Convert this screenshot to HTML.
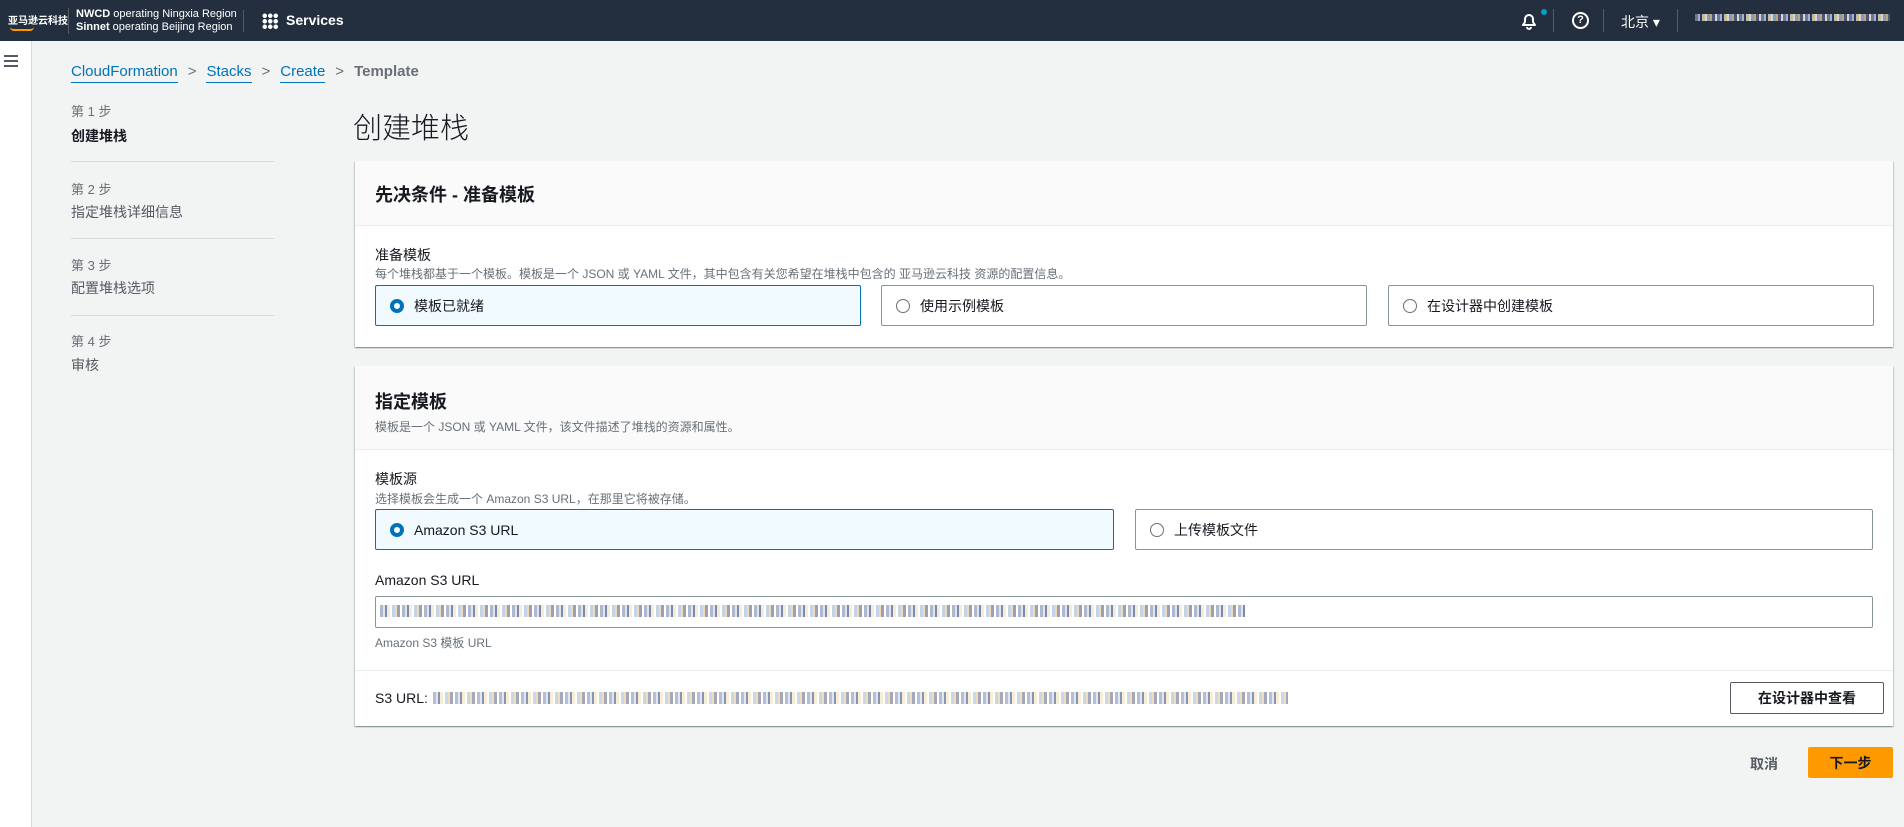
<!DOCTYPE html>
<html><head><meta charset="utf-8"><style>
*{box-sizing:border-box;margin:0;padding:0}
body{width:1904px;height:827px;overflow:hidden;background:#f2f3f3;font-family:"Liberation Sans","Noto Sans CJK SC",sans-serif;font-size:14px;color:#16191f;position:relative}
.a{position:absolute}
.hdr{left:0;top:0;width:1904px;height:41px;background:#232f3e;color:#fff}
.nav{left:0;top:41px;width:32px;height:786px;background:#fff;border-right:1px solid #d5dbdb}
.bc{top:63px;left:71px;font-size:15px;color:#0073bb}
.bc span.l{border-bottom:1px solid #0073bb;padding-bottom:2px}
.bc .s{color:#687078;margin:0 10px}
.step{left:71px;color:#687078;font-size:13px}
.stepn{left:71px;font-size:14px;color:#16191f}
.dv{left:71px;width:203px;height:1px;background:#d5dbdb}
.panel{background:#fff;box-shadow:0 1px 1px rgba(0,28,36,.3),1px 1px 1px rgba(0,28,36,.15),-1px 1px 1px rgba(0,28,36,.15)}
.ph{background:#fafafa;border-bottom:1px solid #eaeded}
.h2{font-size:18px;font-weight:bold}
.desc{font-size:12px;color:#687078}
.tile{border:1px solid #879596;border-radius:2px;height:41px;display:flex;align-items:center;padding-left:14px;font-size:14px}
.tile.on{border-color:#0073bb;background:#f1faff}
.rd{width:14px;height:14px;border-radius:50%;border:1px solid #687078;margin-right:10px;background:#fff}
.on .rd{border:4px solid #0073bb}
.blur{height:12px;background:repeating-linear-gradient(90deg,#7a8aa8 0 3px,#c8d3e6 3px 5px,#2a3a7a 5px 7px,#f0e0b0 7px 10px,#fff 10px 12px,#9bb7d8 12px 15px,#e6c28a 15px 17px,#5a6080 17px 20px,#fff 20px 22px)}
.btn{border:1px solid #545b64;border-radius:2px;display:flex;align-items:center;justify-content:center;font-weight:bold;font-size:14px;color:#16191f;background:#fff}
</style></head><body>
<div class="a hdr">
  <div class="a" style="left:8px;top:12px;font-size:10px;font-weight:bold">亚马逊云科技</div>
  <div class="a" style="left:10px;top:27px;width:24px;height:4px;border-bottom:2px solid #f90;border-radius:0 0 12px 12px"></div>
  <div class="a" style="left:68px;top:8px;width:1px;height:26px;background:#545b64"></div>
  <div class="a" style="left:76px;top:8px;font-size:11px;line-height:13px"><b>NWCD</b> operating Ningxia Region<br><b>Sinnet</b> operating Beijing Region</div>
  <div class="a" style="left:243px;top:10px;width:1px;height:22px;background:#545b64"></div>
  <div class="a" style="left:262px;top:13px;width:16px;height:16px;background:radial-gradient(circle,#fff 2px,transparent 2.5px) 0 0/5.5px 5.5px"></div>
  <div class="a" style="left:286px;top:12px;font-size:14px;font-weight:bold">Services</div>
  <svg class="a" style="left:1520px;top:11px" width="18" height="19" viewBox="0 0 18 19"><path d="M3 14h12l-2-3V8a4 4 0 0 0-8 0v3z" fill="none" stroke="#fff" stroke-width="2" stroke-linejoin="round"/><path d="M7 16a2 2 0 0 0 4 0" fill="none" stroke="#fff" stroke-width="2"/></svg>
  <div class="a" style="left:1541px;top:9px;width:6px;height:6px;border-radius:50%;background:#00a1c9"></div>
  <div class="a" style="left:1553px;top:9px;width:1px;height:23px;background:#545b64"></div>
  <div class="a" style="left:1572px;top:12px;width:17px;height:17px;border:2px solid #fff;border-radius:50%;font-size:11px;font-weight:bold;text-align:center;line-height:13px">?</div>
  <div class="a" style="left:1603px;top:9px;width:1px;height:23px;background:#545b64"></div>
  <div class="a" style="left:1621px;top:12px;font-size:14px">北京 ▾</div>
  <div class="a" style="left:1677px;top:9px;width:1px;height:23px;background:#545b64"></div>
  <div class="a blur" style="left:1695px;top:14px;width:195px;height:7px;opacity:.8"></div>
</div>
<div class="a nav"><div class="a" style="left:4px;top:14px;width:14px;height:2px;background:#545b64;box-shadow:0 5px 0 #545b64,0 10px 0 #545b64"></div></div>
<div class="a bc"><span class="l">CloudFormation</span><span class="s">&gt;</span><span class="l">Stacks</span><span class="s">&gt;</span><span class="l">Create</span><span class="s">&gt;</span><span style="color:#687078;font-weight:bold">Template</span></div>
<div class="a step" style="top:101px">第 1 步</div><div class="a stepn" style="top:126px;font-weight:bold">创建堆栈</div>
<div class="a dv" style="top:161px"></div>
<div class="a step" style="top:179px">第 2 步</div><div class="a stepn" style="top:202px;color:#545b64">指定堆栈详细信息</div>
<div class="a dv" style="top:238px"></div>
<div class="a step" style="top:255px">第 3 步</div><div class="a stepn" style="top:278px;color:#545b64">配置堆栈选项</div>
<div class="a dv" style="top:315px"></div>
<div class="a step" style="top:331px">第 4 步</div><div class="a stepn" style="top:355px;color:#545b64">审核</div>
<div class="a" style="left:353px;top:105px;font-size:29px;font-weight:300">创建堆栈</div>

<div class="a panel" style="left:355px;top:161px;width:1538px;height:186px">
  <div class="ph" style="height:65px;padding:20px 20px"><div class="h2">先决条件 - 准备模板</div></div>
  <div class="a" style="left:20px;top:84px">准备模板</div>
  <div class="a desc" style="left:20px;top:104px">每个堆栈都基于一个模板。模板是一个 JSON 或 YAML 文件，其中包含有关您希望在堆栈中包含的 亚马逊云科技 资源的配置信息。</div>
  <div class="a tile on" style="left:20px;top:124px;width:486px">
    <div class="rd"></div>模板已就绪</div>
  <div class="a tile" style="left:526px;top:124px;width:486px"><div class="rd"></div>使用示例模板</div>
  <div class="a tile" style="left:1033px;top:124px;width:486px"><div class="rd"></div>在设计器中创建模板</div>
</div>

<div class="a panel" style="left:355px;top:366px;width:1538px;height:360px">
  <div class="ph" style="height:84px;padding:22px 20px"><div class="h2">指定模板</div><div class="desc" style="margin-top:4px">模板是一个 JSON 或 YAML 文件，该文件描述了堆栈的资源和属性。</div></div>
  <div class="a" style="left:20px;top:103px">模板源</div>
  <div class="a desc" style="left:20px;top:124px">选择模板会生成一个 Amazon S3 URL，在那里它将被存储。</div>
  <div class="a tile on" style="left:20px;top:143px;width:739px"><div class="rd"></div>Amazon S3 URL</div>
  <div class="a tile" style="left:780px;top:143px;width:738px"><div class="rd"></div>上传模板文件</div>
  <div class="a" style="left:20px;top:206px">Amazon S3 URL</div>
  <div class="a" style="left:20px;top:230px;width:1498px;height:32px;border:1px solid #879596;border-radius:2px;background:#fff">
    <div class="a blur" style="left:4px;top:8px;width:865px;opacity:.6"></div></div>
  <div class="a desc" style="left:20px;top:268px">Amazon S3 模板 URL</div>
  <div class="a" style="left:0;top:304px;width:1538px;height:1px;background:#eaeded"></div>
  <div class="a" style="left:20px;top:324px">S3 URL:</div>
  <div class="a blur" style="left:78px;top:326px;width:855px;opacity:.55"></div>
  <div class="a btn" style="left:1375px;top:316px;width:154px;height:32px">在设计器中查看</div>
</div>

<div class="a" style="left:1750px;top:754px;font-weight:bold;color:#545b64">取消</div>
<div class="a btn" style="left:1808px;top:747px;width:85px;height:31px;background:#ff9900;border-color:#ff9900;color:#16191f">下一步</div>
</body></html>
